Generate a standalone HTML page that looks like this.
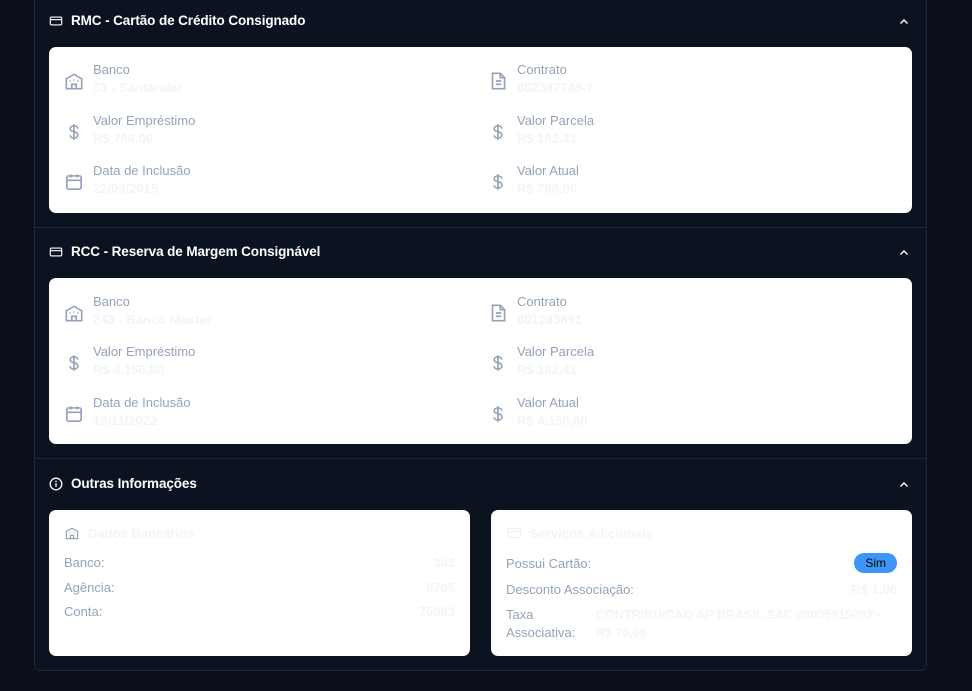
<!DOCTYPE html>
<html><head><meta charset="utf-8"><style>
*{box-sizing:border-box;margin:0;padding:0}
body{width:972px;height:691px;background:#0a0f1a;font-family:"Liberation Sans",sans-serif;position:relative;overflow:hidden}
.wrap{position:absolute;left:34px;top:-10px;width:893px;height:681px;background:#0b1220;border:1px solid #1c2637;border-radius:6px}
.div{position:absolute;left:35px;width:891px;height:1px;background:#1c2637}
.hdr{position:absolute;left:49px;color:#fff;font-weight:bold;font-size:13.5px;display:flex;align-items:center;gap:8px;letter-spacing:-0.1px}
.chev{position:absolute;left:898px}
.card{position:absolute;background:#fff;border-radius:7px}
.item{position:absolute;width:300px;height:40px}
.item svg{position:absolute;left:0;top:8px}
.lab{position:absolute;left:30px;top:0;font-size:13px;color:#94a3b8}
.val{position:absolute;left:30px;top:18px;font-size:13px;color:#f1f5f9;font-weight:bold}
.row{position:absolute;left:15px;right:15px;font-size:13px;color:#94a3b8}
.row b{position:absolute;right:0;top:0;color:#f1f5f9}
.ct{position:absolute;left:15px;top:15px;font-size:13px;font-weight:bold;color:#f1f5f9;display:flex;gap:8px;align-items:center}
</style></head><body>
<div class="wrap"></div>
<div class="div" style="top:227px"></div>
<div class="div" style="top:458px"></div>

<svg width="0" height="0" style="position:absolute"><defs>
<symbol id="bank" viewBox="0 0 20 20"><path d="M3 17V8l7-4 7 4v9zM8 17v-4h4v4M6 10h1M13 10h1M9.5 9h1" fill="none" stroke="#94a3b8" stroke-width="1.5"/></symbol>
<symbol id="doc" viewBox="0 0 20 20"><path d="M5 3h7l4 4v10H5zM8 10h5M8 13h5M12 3v4h4" fill="none" stroke="#94a3b8" stroke-width="1.5"/></symbol>
<symbol id="dol" viewBox="0 0 20 20"><path d="M10 3v14M13.5 7c0-1.5-1.5-2.5-3.5-2.5S6.5 5.5 6.5 7s1.5 2.2 3.5 2.7 3.5 1.3 3.5 3-1.5 2.8-3.5 2.8-3.5-1-3.5-2.5" fill="none" stroke="#94a3b8" stroke-width="1.5"/></symbol>
<symbol id="cal" viewBox="0 0 20 20"><rect x="3.5" y="4.5" width="13" height="12" rx="1.5" fill="none" stroke="#94a3b8" stroke-width="1.5"/><path d="M3.5 8.5h13M7 3v3M13 3v3" stroke="#94a3b8" stroke-width="1.5"/></symbol>
<symbol id="cc" viewBox="0 0 16 16"><rect x="1.5" y="3.5" width="13" height="9" rx="1.5" fill="none" stroke="currentColor" stroke-width="1.3"/><path d="M1.5 6.5h13" stroke="currentColor" stroke-width="1.3"/></symbol>
<symbol id="up" viewBox="0 0 12 12"><path d="M2.5 7.5L6 4l3.5 3.5" fill="none" stroke="#fff" stroke-width="1.4"/></symbol>
</defs></svg>

<div class="hdr" style="top:13px;color:#fff"><svg width="14" height="14" style="color:#fff"><use href="#cc"/></svg>RMC - Cartão de Crédito Consignado</div>
<svg class="chev" width="12" height="12" style="top:16px"><use href="#up"/></svg>
<div class="card" style="left:49px;top:47px;width:863px;height:166px">
 <div class="item" style="left:14px;top:15px"><svg width="22" height="22"><use href="#bank"/></svg><div class="lab">Banco</div><div class="val">33 - Santander</div></div>
 <div class="item" style="left:438px;top:15px"><svg width="22" height="22"><use href="#doc"/></svg><div class="lab">Contrato</div><div class="val">802347748-7</div></div>
 <div class="item" style="left:14px;top:66px"><svg width="22" height="22"><use href="#dol"/></svg><div class="lab">Valor Empréstimo</div><div class="val">R$ 788,00</div></div>
 <div class="item" style="left:438px;top:66px"><svg width="22" height="22"><use href="#dol"/></svg><div class="lab">Valor Parcela</div><div class="val">R$ 182,41</div></div>
 <div class="item" style="left:14px;top:116px"><svg width="22" height="22"><use href="#cal"/></svg><div class="lab">Data de Inclusão</div><div class="val">22/09/2015</div></div>
 <div class="item" style="left:438px;top:116px"><svg width="22" height="22"><use href="#dol"/></svg><div class="lab">Valor Atual</div><div class="val">R$ 788,00</div></div>
</div>

<div class="hdr" style="top:244px"><svg width="14" height="14" style="color:#fff"><use href="#cc"/></svg>RCC - Reserva de Margem Consignável</div>
<svg class="chev" width="12" height="12" style="top:247px"><use href="#up"/></svg>
<div class="card" style="left:49px;top:278px;width:863px;height:166px">
 <div class="item" style="left:14px;top:16px"><svg width="22" height="22"><use href="#bank"/></svg><div class="lab">Banco</div><div class="val">243 - Banco Master</div></div>
 <div class="item" style="left:438px;top:16px"><svg width="22" height="22"><use href="#doc"/></svg><div class="lab">Contrato</div><div class="val">801243891</div></div>
 <div class="item" style="left:14px;top:66px"><svg width="22" height="22"><use href="#dol"/></svg><div class="lab">Valor Empréstimo</div><div class="val">R$ 4.156,80</div></div>
 <div class="item" style="left:438px;top:66px"><svg width="22" height="22"><use href="#dol"/></svg><div class="lab">Valor Parcela</div><div class="val">R$ 182,41</div></div>
 <div class="item" style="left:14px;top:117px"><svg width="22" height="22"><use href="#cal"/></svg><div class="lab">Data de Inclusão</div><div class="val">10/11/2022</div></div>
 <div class="item" style="left:438px;top:117px"><svg width="22" height="22"><use href="#dol"/></svg><div class="lab">Valor Atual</div><div class="val">R$ 4.156,80</div></div>
</div>

<div class="hdr" style="top:476px"><svg width="14" height="14"><circle cx="7" cy="7" r="5.8" fill="none" stroke="#fff" stroke-width="1.3"/><path d="M7 6.3v3.5" stroke="#fff" stroke-width="1.4"/><circle cx="7" cy="4.4" r=".8" fill="#fff"/></svg>Outras Informações</div>
<svg class="chev" width="12" height="12" style="top:479px"><use href="#up"/></svg>

<div class="card" style="left:49px;top:510px;width:421px;height:146px">
 <div class="ct"><svg width="16" height="16"><use href="#bank"/></svg>Dados Bancários</div>
 <div class="row" style="top:45px">Banco:<b>341</b></div>
 <div class="row" style="top:70px">Agência:<b>9705</b></div>
 <div class="row" style="top:94px">Conta:<b>70093</b></div>
</div>
<div class="card" style="left:491px;top:510px;width:421px;height:146px">
 <div class="ct" style="color:#f1f5f9"><svg width="16" height="16" style="color:#eef2f6"><use href="#cc"/></svg>Serviços Adicionais</div>
 <div class="row" style="top:46px">Possui Cartão:<span style="position:absolute;right:0;top:-3px;background:#3b96f5;color:#000;font-size:12px;border-radius:10px;padding:3px 11px">Sim</span></div>
 <div class="row" style="top:72px">Desconto Associação:<b>R$ 1,00</b></div>
 <div class="row" style="top:96px;line-height:18px">Taxa<br>Associativa:<b style="left:90px;right:auto;top:0;white-space:nowrap;font-size:12.5px">CONTRIBUICAO AP BRASIL SAC 08005915092 -<br>R$ 70,08</b></div>
</div>
</body></html>
